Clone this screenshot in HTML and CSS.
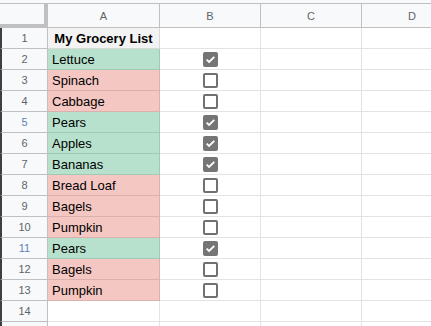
FILE: index.html
```html
<!DOCTYPE html>
<html lang="en">
<head>
    <meta charset="UTF-8">
    <title>My Grocery List</title>
    <link rel="stylesheet" href="styles.css">
</head>
<body>

<div class="sheet">
    <!-- header row -->
    <div class="corner"></div>
    <div class="colHead">A</div>
    <div class="colHead">B</div>
    <div class="colHead">C</div>
    <div class="colHead">D</div>

    <div class="rowHead">1</div>
    <div class="cell title">My Grocery List</div>
    <div class="cell"></div>
    <div class="cell"></div>
    <div class="cell"></div>

    <div class="rowHead">2</div>
    <div class="cell green">Lettuce</div>
    <div class="cell check"><span class="box on"><svg viewBox="0 0 15 15"><polyline points="3.6,7.6 6.1,10 11.3,4.8"/></svg></span></div>
    <div class="cell"></div>
    <div class="cell"></div>

    <div class="rowHead">3</div>
    <div class="cell red">Spinach</div>
    <div class="cell check"><span class="box"></span></div>
    <div class="cell"></div>
    <div class="cell"></div>

    <div class="rowHead">4</div>
    <div class="cell red">Cabbage</div>
    <div class="cell check"><span class="box"></span></div>
    <div class="cell"></div>
    <div class="cell"></div>

    <div class="rowHead sel">5</div>
    <div class="cell green">Pears</div>
    <div class="cell check"><span class="box on"><svg viewBox="0 0 15 15"><polyline points="3.6,7.6 6.1,10 11.3,4.8"/></svg></span></div>
    <div class="cell"></div>
    <div class="cell"></div>

    <div class="rowHead">6</div>
    <div class="cell green">Apples</div>
    <div class="cell check"><span class="box on"><svg viewBox="0 0 15 15"><polyline points="3.6,7.6 6.1,10 11.3,4.8"/></svg></span></div>
    <div class="cell"></div>
    <div class="cell"></div>

    <div class="rowHead">7</div>
    <div class="cell green">Bananas</div>
    <div class="cell check"><span class="box on"><svg viewBox="0 0 15 15"><polyline points="3.6,7.6 6.1,10 11.3,4.8"/></svg></span></div>
    <div class="cell"></div>
    <div class="cell"></div>

    <div class="rowHead">8</div>
    <div class="cell red">Bread Loaf</div>
    <div class="cell check"><span class="box"></span></div>
    <div class="cell"></div>
    <div class="cell"></div>

    <div class="rowHead">9</div>
    <div class="cell red">Bagels</div>
    <div class="cell check"><span class="box"></span></div>
    <div class="cell"></div>
    <div class="cell"></div>

    <div class="rowHead">10</div>
    <div class="cell red">Pumpkin</div>
    <div class="cell check"><span class="box"></span></div>
    <div class="cell"></div>
    <div class="cell"></div>

    <div class="rowHead sel">11</div>
    <div class="cell green">Pears</div>
    <div class="cell check"><span class="box on"><svg viewBox="0 0 15 15"><polyline points="3.6,7.6 6.1,10 11.3,4.8"/></svg></span></div>
    <div class="cell"></div>
    <div class="cell"></div>

    <div class="rowHead">12</div>
    <div class="cell red">Bagels</div>
    <div class="cell check"><span class="box"></span></div>
    <div class="cell"></div>
    <div class="cell"></div>

    <div class="rowHead">13</div>
    <div class="cell red">Pumpkin</div>
    <div class="cell check"><span class="box"></span></div>
    <div class="cell"></div>
    <div class="cell"></div>

    <div class="rowHead">14</div>
    <div class="cell"></div>
    <div class="cell"></div>
    <div class="cell"></div>
    <div class="cell"></div>

    <!-- next row, only its top shows -->
    <div class="rowHead"></div>
    <div class="cell"></div>
    <div class="cell"></div>
    <div class="cell"></div>
    <div class="cell"></div>
</div>

</body>
</html>
```

FILE: styles.css
```css
body {
    margin: 0;
    background: #ffffff;
    overflow: hidden;
    font-family: "Liberation Sans", Arial, sans-serif;
}

.sheet {
    display: grid;
    grid-template-columns: 48px 112px 101px 101px 101px;
    grid-template-rows: 25px repeat(15, 21px);
    padding-top: 3px;
    background: #f8f9fa;
}

/* top-left corner with the thick freeze lines */
.corner {
    background: #f8f9fa;
    border-top: 1px solid #c0c0c0;
    border-right: 4px solid #c0c0c0;
    border-bottom: 4px solid #c0c0c0;
}

.colHead {
    background: #f8f9fa;
    border-top: 1px solid #c0c0c0;
    border-right: 1px solid #c0c0c0;
    border-bottom: 1px solid #c0c0c0;
    color: #5f6368;
    font-size: 11px;
    display: flex;
    align-items: center;
    justify-content: center;
    padding-top: 1px;
}

.rowHead {
    background: #f8f9fa;
    border-left: 2px solid #3c4043;
    border-right: 1px solid #c0c0c0;
    border-bottom: 1px solid #c0c0c0;
    color: #5f6368;
    font-size: 11px;
    display: flex;
    align-items: center;
    justify-content: center;
}

.rowHead.sel {
    color: #5d80b5;
}

.cell {
    background: #ffffff;
    border-right: 1px solid rgba(0, 0, 0, 0.11);
    border-bottom: 1px solid rgba(0, 0, 0, 0.11);
    font-size: 13px;
    color: #000000;
    padding-left: 4px;
    display: flex;
    align-items: center;
    white-space: nowrap;
}

.title {
    background: #f3f3f3;
    font-weight: bold;
    justify-content: center;
    padding-left: 0;
}

.green {
    background: #b7e1cd;
}

.red {
    background: #f4c7c3;
}

.check {
    justify-content: center;
    padding-left: 0;
}

.box {
    width: 15px;
    height: 15px;
    box-sizing: border-box;
    border: 2px solid #717171;
    border-radius: 2px;
    background: #ffffff;
    position: relative;
}

.box.on {
    background: #757575;
    border-color: #757575;
}

.box svg {
    position: absolute;
    left: -2px;
    top: -2px;
    width: 15px;
    height: 15px;
}

.box polyline {
    fill: none;
    stroke: #ffffff;
    stroke-width: 1.8;
}
```
